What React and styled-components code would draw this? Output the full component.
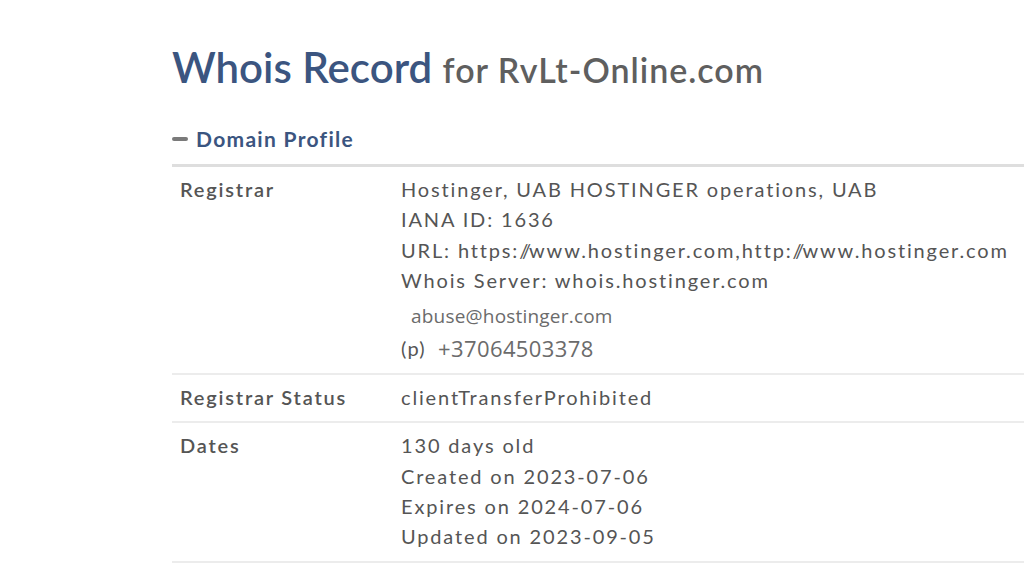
import React from "react";
import styled, { createGlobalStyle } from "styled-components";

const Global = createGlobalStyle`
  html, body { margin: 0; padding: 0; background: #fff; }
  body { font-family: Lato, "Open Sans", sans-serif; overflow: hidden; }
`;

const Page = styled.div`
  padding: 41px 0 0 172px;
  width: 900px;
`;

const Title = styled.h1`
  margin: 0;
  font-family: Lato, sans-serif;
  font-weight: 600;
  font-size: 42px;
  line-height: 52px;
  color: #3b5580;
  letter-spacing: 0;
  white-space: nowrap;
`;

const TitleSub = styled.span`
  font-size: 34px;
  color: #5f5f5f;
  letter-spacing: 1px;
`;

const SectionHead = styled.div`
  display: flex;
  align-items: center;
  gap: 8px;
  margin-top: 30px;
  padding-bottom: 12px;
  border-bottom: 3px solid #dedede;
`;

const Minus = styled.span`
  display: block;
  width: 16px;
  height: 4px;
  border-radius: 2px;
  background: #7a7a7a;
`;

const SectionTitle = styled.span`
  font-size: 21px;
  font-weight: 700;
  color: #3b5580;
  letter-spacing: 1.3px;
  line-height: 26px;
`;

const Row = styled.div`
  display: grid;
  grid-template-columns: 221px 1fr;
  border-bottom: 2px solid #ececec;
  padding: 7px 0 ${(p) => (p.$extra ? 10 : 9)}px;
`;

const Label = styled.div`
  padding-left: 8px;
  font-size: 20px;
  font-weight: 600;
  color: #555;
  letter-spacing: 1.8px;
  line-height: 30px;
`;

const Value = styled.div`
  padding-left: 8px;
  font-size: 20px;
  color: #555;
  letter-spacing: 1.85px;
  line-height: 30.3px;
  white-space: nowrap;
`;

const Line = styled.div``;

const Slashes = styled.span`
  letter-spacing: -1.9px;
`;

const Email = styled.div`
  font-family: "Open Sans", sans-serif;
  font-size: 19px;
  color: #6b6b6b;
  padding-left: 10px;
  letter-spacing: 0.2px;
  line-height: 34px;
  margin-top: 4px;
`;

const Phone = styled.div`
  display: flex;
  align-items: center;
  line-height: 30px;
  height: 30px;
`;

const PhoneLabel = styled.span`
  font-size: 20px;
  color: #555;
  letter-spacing: 1.2px;
  width: 37px;
`;

const PhoneNum = styled.span`
  font-family: "Open Sans", sans-serif;
  font-size: 22px;
  color: #6b6b6b;
  letter-spacing: 0.4px;
`;

export default function App() {
  return (
    <>
      <Global />
      <Page>
        <Title>
          Whois Record <TitleSub>for RvLt-Online.com</TitleSub>
        </Title>
        <SectionHead>
          <Minus />
          <SectionTitle>Domain Profile</SectionTitle>
        </SectionHead>
        <Row $extra>
          <Label>Registrar</Label>
          <Value>
            <Line>Hostinger, UAB HOSTINGER operations, UAB</Line>
            <Line>IANA ID: 1636</Line>
            <Line>
              URL: https:<Slashes>//</Slashes>www.hostinger.com,http:<Slashes>//</Slashes>www.hostinger.com
            </Line>
            <Line>Whois Server: whois.hostinger.com</Line>
            <Email>abuse@hostinger.com</Email>
            <Phone>
              <PhoneLabel>(p)</PhoneLabel>
              <PhoneNum>+37064503378</PhoneNum>
            </Phone>
          </Value>
        </Row>
        <Row>
          <Label>Registrar Status</Label>
          <Value>clientTransferProhibited</Value>
        </Row>
        <Row>
          <Label>Dates</Label>
          <Value>
            <Line>130 days old</Line>
            <Line>Created on 2023-07-06</Line>
            <Line>Expires on 2024-07-06</Line>
            <Line>Updated on 2023-09-05</Line>
          </Value>
        </Row>
      </Page>
    </>
  );
}
